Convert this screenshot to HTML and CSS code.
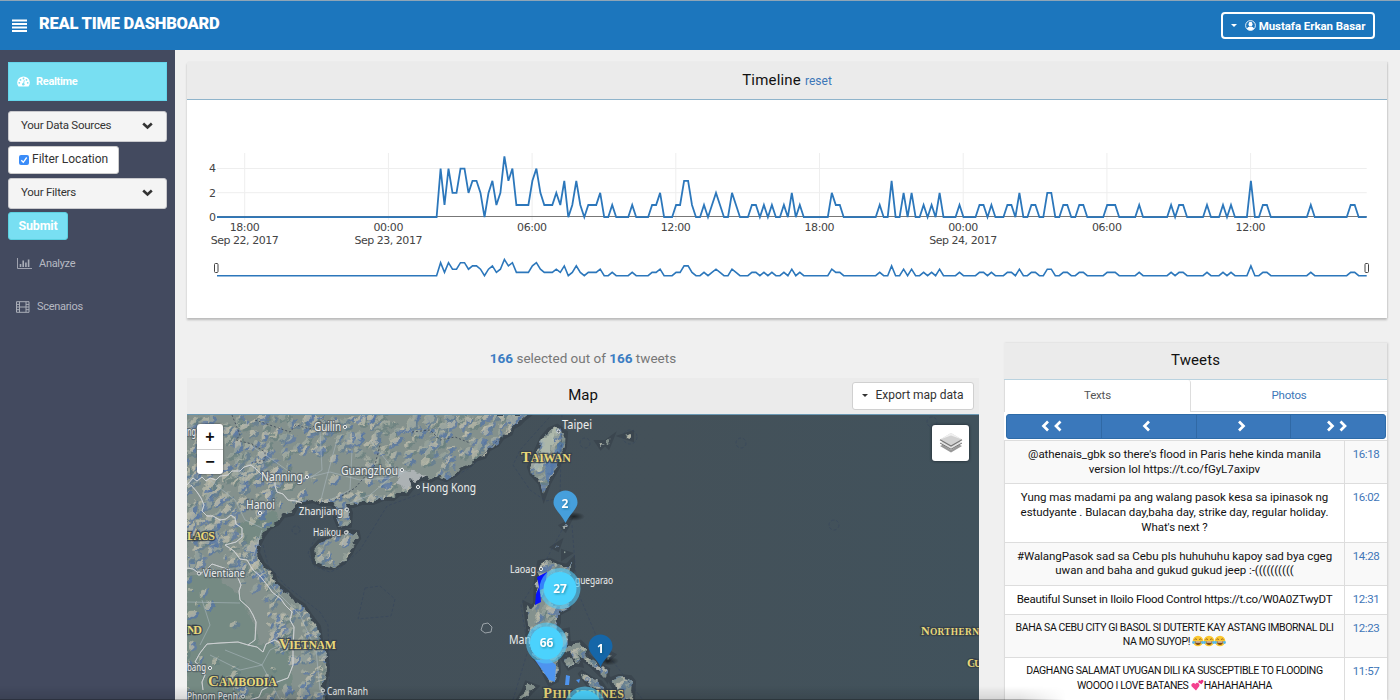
FILE: index.html
```html
<!DOCTYPE html>
<html lang="en">
<head>
<meta charset="utf-8">
<title>Real Time Dashboard</title>
<link rel="stylesheet" href="styles.css">
</head>
<body>
<header class="topbar">
  <svg class="burger" width="15" height="14" viewBox="0 0 15 14"><path d="M0 1.500h15M0 5h15M0 8.500h15M0 12h15" stroke="#fff" stroke-width="2"/></svg>
  <h1 class="brand">REAL TIME DASHBOARD</h1>
  <button class="user"><i class="caret"></i>
    <svg width="11" height="11" viewBox="0 0 11 11"><circle cx="5.500" cy="5.500" r="4.900" fill="none" stroke="#fff" stroke-width=".9"/><ellipse cx="5.500" cy="4.200" rx="2" ry="2.400" fill="#fff"/><path d="M1.800 8.700Q2.800 6.800 4.600 6.400L5.500 7L6.400 6.400Q8.200 6.800 9.200 8.700Q5.500 12 1.800 8.700Z" fill="#fff"/></svg>
    <span>Mustafa Erkan Basar</span></button>
</header>
<div class="shell">
  <nav class="sidebar">
    <a class="nav active"><svg width="13" height="11" viewBox="0 0 13 11"><path d="M1.500 10.600A6.300 6.300 0 1 1 11.500 10.600Z" fill="#fff"/><g fill="#78dff2"><circle cx="2.300" cy="6.800" r=".9"/><circle cx="3.500" cy="3.900" r=".9"/><circle cx="6.500" cy="2.500" r=".9"/><circle cx="9.500" cy="3.900" r=".9"/><circle cx="10.700" cy="6.800" r=".9"/><circle cx="6.300" cy="8.300" r="1.300"/></g><path d="M6.300 8.300L7.400 4.300" stroke="#78dff2" stroke-width=".9"/></svg><span>Realtime</span></a>
    <div class="select"><span>Your Data Sources</span><svg width="11" height="8" viewBox="0 0 11 8"><path d="M1.200 1.500L5.500 5.500L9.800 1.500" fill="none" stroke="#333" stroke-width="2.600"/></svg></div>
    <label class="check"><svg width="10" height="10" viewBox="0 0 10 10"><rect width="10" height="10" rx="2" fill="#3b8cf8"/><path d="M2.300 5.200L4.300 7.300L7.700 2.500" fill="none" stroke="#fff" stroke-width="1.300"/></svg><span>Filter Location</span></label>
    <div class="select"><span>Your Filters</span><svg width="11" height="8" viewBox="0 0 11 8"><path d="M1.200 1.500L5.500 5.500L9.800 1.500" fill="none" stroke="#333" stroke-width="2.600"/></svg></div>
    <button class="submit">Submit</button>
    <a class="nav plain"><svg width="15" height="11" viewBox="0 0 15 11"><path d="M.5 0V10.500H15" fill="none" stroke="#a9adb7" stroke-width=".9"/><path d="M3.500 9V6M6.200 9V2.500M8.900 9V4.500M11.600 9V1.500" stroke="#a9adb7" stroke-width="1.600"/></svg><span>Analyze</span></a>
    <a class="nav plain last"><svg width="14" height="12" viewBox="0 0 14 12"><path d="M.5.7H13V11.300H.5ZM3.500.7V11.300M10 .7V11.300M3.500 6H10M.5 3.400H3.500M.5 6H3.500M.5 8.700H3.500M10 3.400H13M10 6H13M10 8.700H13" fill="none" stroke="#a9adb7"/></svg><span>Scenarios</span></a>
  </nav>
  <main class="content">
    <section class="card timeline">
      <div class="card-head"><h2>Timeline</h2><a class="reset">reset</a></div>
      <svg class="chart" id="chart" viewBox="187 100 1200 217" width="1200" height="217"></svg>
    </section>
    <div class="columns">
      <div class="left">
        <p class="summary"><b>166</b> selected out of <b>166</b> tweets</p>
        <section class="mapcard">
          <div class="map-head"><h2>Map</h2><button class="export"><i class="caret dark"></i><span>Export map data</span></button></div>
          <div class="map">
<svg width="792" height="285" viewBox="187 415 792 285">
<defs>
<clipPath id="land"><path id="coast" d="M187 415H528L523 419L519 423L512 427L510 433L502 437L497 444L488 449L484 456L475 459L470 464L460 468L455 474L446 479L437 476L430 480L422 477L415 482L410 479L412 487L407 493L399 493L393 498L383 498L373 502L362 502L353 505L347 505L350 513L349 525L340 527L336 517L337 507L332 503L321 503L313 500L303 502L297 504L292 513L283 515L277 523L269 527L263 535L258 545L257 553L262 564L268 570L273 575L275 583L286 592L294 600L303 606L309 615L318 627L320 640L325 650L327 670L323 685L325 700H187Z
M313 550L320 542L333 537L347 532L357 533L358 538L354 544L350 553L343 562L332 567L323 566L315 562Z
M557 427L565 433L564 447L557 467L548 483L544 494L541 483L532 473L530 467L535 455L543 438L550 430Z
M540 563L550 561L558 565L567 567L572 562L572 570L568 580L573 590L568 608L558 613L558 622L555 630L558 633L567 631L568 645L580 643L587 650L585 655L595 662L600 667L607 677L602 675L590 663L577 655L567 651L557 657L558 672L556 680L550 683L540 663L533 655L528 640L529 627L526 605L532 608L536 604L537 580Z
M564 659L571 658L574 664L569 667ZM567 651L578 656L580 664L576 663L573 657ZM580 672L592 680L598 690L590 686ZM592 680L600 683L606 692L603 700L596 690ZM611 680L619 677L630 678L633 682L632 700H622L616 689ZM527 684L535 687L530 692L523 700H519L524 692ZM602 667L607 670L606 677L602 672Z
M599 443L604 443L601 446ZM606 443L610 440L608 445ZM625 436L631 434L631 438ZM555 547L558 545L557 548ZM564 553L567 554L564 556ZM563 526L567 524L565 528ZM604 651L612 655L608 659Z"/></clipPath>
<filter id="rough" filterUnits="userSpaceOnUse" x="180" y="408" width="480" height="300"><feTurbulence type="fractalNoise" baseFrequency=".16" numOctaves="2" seed="4"/><feDisplacementMap in="SourceGraphic" scale="7" xChannelSelector="R" yChannelSelector="G"/></filter>
<radialGradient id="shade"><stop offset="0" stop-color="#000" stop-opacity=".55"/><stop offset="1" stop-color="#000" stop-opacity="0"/></radialGradient>
<linearGradient id="sea" x1="0" x2="1"><stop offset="0" stop-color="#43505a"/><stop offset=".6" stop-color="#445159"/><stop offset="1" stop-color="#41525c"/></linearGradient>
</defs>
<rect x="187" y="415" width="792" height="285" fill="url(#sea)"/>
<use href="#coast" fill="none" stroke="#3b464f" stroke-width="6"/>
<rect x="187" y="415" width="300" height="14" fill="#84918d"/><rect x="187" y="415" width="14" height="285" fill="#7c8d88"/><rect x="187" y="690" width="134" height="10" fill="#7c8d88"/>
<g filter="url(#rough)"><g clip-path="url(#land)">
<use href="#coast" fill="#84918d"/>
<path d="M187 575L215 575L240 595L253 620L258 645L290 640L292 685L250 700H187ZM235 525L275 510L280 525L262 535L258 555L240 540Z" fill="#758a83"/>
<g id="relief"></g>
<path d="M557 427L553 445L540 472L534 470L543 440Z" fill="#bec8b7" opacity=".7"/><path d="M564 440L557 465L547 484L545 472L551 455Z" fill="#4a73ad" opacity=".7"/>
<path d="M393 470L397 466L401 470L412 471L425 476L420 483L411 484L407 491L402 485L396 483L399 477Z" fill="#b9bec2" opacity=".75"/>
</g></g>
<g fill="none" stroke="#aebcc2" stroke-width="1" opacity=".55"><path d="M250 445L270 458L298 478M320 430L322 470L310 478M337 440L326 480L321 500M352 450L350 490L330 500M298 480L330 472L360 480L390 478L410 470M390 478L370 495L350 503M370 440L390 465L402 475M210 480L235 500L245 520L262 528M202 600L210 625L200 645M187 602L240 603M262 530L252 560L275 590L300 615L316 650L320 690M225 650L262 665L270 650L290 640M210 655L240 670L262 665L280 700M345 535L342 545"/></g>
<g fill="none" stroke="#444d57" stroke-width="2.700" opacity=".65"><use href="#borders"/></g>
<path id="borders" d="M187 485L193 478L197 481L202 477L206 481L210 478L216 480L220 476L228 475L232 471L240 471L244 467L251 465L256 469L262 475L268 476L275 480L275 486L277 492L283 494L288 500L296 501L302 503M191 485L197 492L201 498L204 505L202 511L207 516L213 516L220 520L226 519L231 515L235 518L236 524L242 528L242 537L236 542L225 545L234 551L240 559L247 560L253 570L260 576L268 586L272 592L281 599L285 605L292 612L290 620L294 627L293 650L293 665L288 678L277 682L270 686L262 690L259 697L250 700M187 568L193 569L200 574L208 568L212 564L221 567L230 570L238 578L241 585L239 591L240 600L249 608L253 615L256 622L255 640L248 645L238 642L220 643L207 644L200 653L195 662L202 667L205 675L202 682L203 690M248 645L257 647L263 652L266 644L275 640L283 645L293 642" fill="none" stroke="#d0d3d5" stroke-width=".9"/>
<path d="M232 415L240 435L236 440L252 444L265 452L265 460L252 463M255 420L290 432L296 425L310 429L325 418M335 500L355 488L375 465L380 445M412 432L430 430L440 440L455 437L470 443" fill="none" stroke="#384455" stroke-dasharray="2 2" opacity=".8"/>
<path d="M537 577L547 572L545 588L540 590L541 602L535 605L536 594L539 587Z" fill="#0712ff"/><path d="M535 660L549 659L556 665L555 682L549 680ZM566 675L570 676L569 685H565ZM576 680L580 679L579 683Z" fill="#4e94ef"/>
<g fill="none" stroke="#34445c" stroke-dasharray="3 2" opacity=".55"><path d="M365 588L380 586L395 599L391 616L358 619ZM528 415L500 438L470 468L425 492L387 506L360 550L340 568L330 572L315 567L308 553L315 538L330 530M556 410L520 450L513 465L530 490L546 501L560 498L562 410M562 530L545 562L529 592L521 605L528 650L513 700M572 525L577 590L600 645L643 700M263 545L268 565L285 585L320 612L328 625L330 700"/><circle cx="296" cy="530" r="4"/><circle cx="585" cy="443" r="5"/><circle cx="630" cy="437" r="7"/><circle cx="741" cy="443" r="5"/><circle cx="834" cy="525" r="5"/><circle cx="932" cy="422" r="5"/></g>
<path d="M483 624L488 623L492 627L491 632L485 633L481 630Z" fill="none" stroke="#b1b8bc" stroke-width=".8"/>
<g class="city"><text x="187" y="436" textLength="9">ng</text><text x="314" y="431" textLength="27">Guilin</text><text x="261" y="481" textLength="42">Nanning</text><text x="341" y="475" textLength="57">Guangzhou</text><text x="422" y="492" textLength="54">Hong Kong</text><text x="246" y="509" textLength="29">Hanoi</text><text x="299" y="514.500" class="sm" textLength="44">Zhanjiang</text><text x="313" y="536" class="sm" textLength="28">Haikou</text><text x="203" y="577" class="sm" textLength="42">Vientiane</text><text x="187" y="671" class="sm" textLength="19">bang</text><text x="187" y="700" class="sm" textLength="51">Phnom Penh</text><text x="327" y="694.500" class="sm" textLength="41">Cam Ranh</text><text x="562" y="429" textLength="30">Taipei</text><text x="510" y="573" class="sm" textLength="26">Laoag</text><text x="575" y="584" class="sm" textLength="38">guegarao</text><text x="509" y="644" textLength="22">Man</text></g>
<g fill="#56626b" stroke="#eef0f0"><circle cx="345" cy="427" r="1.600"/><circle cx="307" cy="477" r="1.600"/><circle cx="402" cy="470" r="1.600"/><circle cx="418" cy="487" r="1.600"/><circle cx="260" cy="513" r="1.600"/><circle cx="347" cy="509.500" r="1.600"/><circle cx="346" cy="532.500" r="1.600"/><circle cx="199" cy="573.500" r="1.600"/><circle cx="210" cy="668" r="1.600"/><circle cx="243" cy="696.500" r="1.600"/><circle cx="323" cy="690.500" r="1.600"/><circle cx="558.500" cy="431.500" r="1.600"/><circle cx="541" cy="569" r="1.600"/></g>
<g class="country"><text x="521" y="462" textLength="50">T<tspan>AIWAN</tspan></text><text x="187" y="540" textLength="28"><tspan>LAOS</tspan></text><text x="187" y="634" textLength="15"><tspan>ND</tspan></text><text x="279" y="649" textLength="57">V<tspan>IETNAM</tspan></text><text x="208" y="685.500" textLength="69">C<tspan>AMBODIA</tspan></text><text x="543" y="698" textLength="81">P<tspan>HILIPPINES</tspan></text><text x="921" y="635" class="mini" textLength="58">N<tspan>ORTHERN</tspan></text><text x="967" y="666.500" class="mini" textLength="14">G<tspan>U</tspan></text></g>
<ellipse cx="574" cy="516.500" rx="11" ry="4.500" fill="url(#shade)"/><ellipse cx="608" cy="661" rx="11" ry="4.500" fill="url(#shade)"/>
<path d="M565.500 523C562 515 553.500 509 553.500 502.500A12 12 0 0 1 577.500 502.500C577.500 509 569 515 565.500 523Z" fill="#469fdc"/>
<path d="M600.500 667C597 659 588.500 653 588.500 646.500A12 12 0 0 1 612.500 646.500C612.500 653 604 659 600.500 667Z" fill="#1566a8"/>
<g fill="#52c8f5" fill-opacity=".62"><circle cx="560" cy="588.500" r="20.500"/><circle cx="546.500" cy="643" r="20.500"/><circle cx="585" cy="707" r="20.500"/></g>
<g fill="#4bd2fd"><circle cx="560" cy="588.500" r="16.500"/><circle cx="546.500" cy="643" r="16.500"/><circle cx="585" cy="707" r="16.500"/></g>
<g class="num"><text x="565" y="508">2</text><text x="600.500" y="652.500">1</text><text x="560" y="592.500">27</text><text x="546.500" y="647">66</text></g>
</svg>
            <div class="zoom"><span>+</span><span>−</span></div>
            <div class="layers"><svg width="24" height="22" viewBox="0 0 24 22"><path d="M1 14L12 20.500L23 14L12 9Z" fill="#989898"/><path d="M1 11L12 18L23 11L12 6Z" fill="#e2e2e2"/><path d="M1 11L12 17.200L23 11" fill="none" stroke="#777"/><path d="M1 7.500L12 14.500L23 7.500L12 1Z" fill="#d2d2d2"/><path d="M1 7.500L12 1L23 7.500L12 3.500Z" fill="#f0f0f0"/><path d="M1 7.800L12 14L23 7.800" fill="none" stroke="#777" stroke-width="1.200"/></svg></div>
          </div>
        </section>
      </div>
      <section class="tweets">
        <div class="card-head"><h2>Tweets</h2></div>
        <div class="tabs"><a class="tab on">Texts</a><a class="tab">Photos</a></div>
        <div class="pager">
          <span><svg width="21" height="12" viewBox="0 0 21 12"><path d="M7 1.500L2.500 6L7 10.500M19.500 1.500L15 6L19.500 10.500"/></svg></span>
          <span><svg width="9" height="12" viewBox="0 0 9 12"><path d="M7 1.500L2.500 6L7 10.500"/></svg></span>
          <span><svg width="9" height="12" viewBox="0 0 9 12"><path d="M2 1.500L6.500 6L2 10.500"/></svg></span>
          <span><svg width="21" height="12" viewBox="0 0 21 12"><path d="M2 1.500L6.500 6L2 10.500M14.500 1.500L19 6L14.500 10.500"/></svg></span>
        </div>
        <div class="rows">
          <div class="row"><p>@athenais_gbk so there's flood in Paris hehe kinda manila<br>version lol https://t.co/fGyL7axipv</p><time>16:18</time></div>
          <div class="row"><p>Yung mas madami pa ang walang pasok kesa sa ipinasok ng<br>estudyante . Bulacan day,baha day, strike day, regular holiday.<br>What's next ?</p><time>16:02</time></div>
          <div class="row"><p>#WalangPasok sad sa Cebu pls huhuhuhu kapoy sad bya cgeg<br>uwan and baha and gukud gukud jeep :-((((((((((</p><time>14:28</time></div>
          <div class="row tight"><p>Beautiful Sunset in Iloilo Flood Control https://t.co/W0A0ZTwyDT</p><time>12:31</time></div>
          <div class="row caps"><p>BAHA SA CEBU CITY GI BASOL SI DUTERTE KAY ASTANG IMBORNAL DLI<br>NA MO SUYOP! <svg class="emoji" width="34" height="12" viewBox="0 0 34 12"><defs><g id="joy"><circle cx="6" cy="6" r="5.300" fill="#fbc72f"/><path d="M2.700 6.200H9.300Q8.800 10 6 10T2.700 6.200Z" fill="#7c4a1c"/><path d="M3.400 6.500H8.600V7.500H3.400Z" fill="#fff"/><path d="M2.500 4.600Q3.700 3.200 4.900 4.600M7.100 4.600Q8.300 3.200 9.500 4.600" fill="none" stroke="#7c4a1c" stroke-width=".8"/><circle cx="1.500" cy="7.500" r="1.400" fill="#56b9ec"/><circle cx="10.500" cy="7.500" r="1.400" fill="#56b9ec"/></g></defs><use href="#joy"/><use href="#joy" x="11"/><use href="#joy" x="22"/></svg></p><time>12:23</time></div>
          <div class="row caps"><p>DAGHANG SALAMAT UYUGAN DILI KA SUSCEPTIBLE TO FLOODING<br>WOOOO I LOVE BATANES <svg class="emoji" width="13" height="12" viewBox="0 0 13 12"><path d="M5 11.500L.8 7.500C-.8 5 2.500 2.500 4.300 5C6 2.300 9.400 4.500 8.200 7.200Z" fill="#f4418f"/><path d="M10.500 5.300L7.500 3.500C6.600 1.800 8.500.3 9.700 1.800C10.500 0 13 .9 12.300 2.800Z" fill="#e63384"/></svg>HAHAHAHAHA</p><time>11:57</time></div>
        </div>
      </section>
    </div>
  </main>
</div>
<div class="status-shadow"></div>
<script src="app.js"></script>
</body>
</html>
```
FILE: styles.css
```css
* { box-sizing: border-box; }
body { margin: 0; width: 1400px; height: 700px; overflow: hidden; background: #f0f0f0; font-family: Roboto, "Liberation Sans", sans-serif; color: #222; }
button { font: inherit; }
h1, h2, p { margin: 0; font-weight: 400; }
.topbar { height: 50px; background: #1c76bd; border-top: 1px solid #8fa5b6; display: flex; align-items: center; padding: 0 25px 0 12px; }
.burger { margin-right: 12px; }
.brand { color: #fff; font-size: 16.500px; font-weight: 900; letter-spacing: -.25px; flex: 1; line-height: 20px; padding-bottom: 3px; }
.user { height: 27px; width: 154px; border: 2px solid #fff; border-radius: 4px; background: none; color: #fff; font-size: 11.500px; font-weight: 700; letter-spacing: -.05px; display: flex; align-items: center; justify-content: center; gap: 3px; padding: 0; white-space: nowrap; }
.caret { border: 3px solid transparent; border-top-color: #fff; border-bottom: 0; margin-right: 5px; }
.caret.dark { border-top-color: #333; margin-right: 7px; }
.shell { display: flex; height: 650px; }
.sidebar { width: 175px; background: #434a5f; padding: 12px 8px; display: flex; flex-direction: column; align-items: flex-start; }
.nav { display: flex; align-items: center; gap: 7px; padding-left: 9px; font-size: 11px; width: 159px; }
.active { height: 39px; background: #78dff2; border: 1px solid #65d5eb; color: #fff; font-weight: 700; letter-spacing: -.3px; gap: 6px; margin-bottom: 10px; padding-left: 8px; }
.select { width: 159px; height: 31px; background: #f4f4f4; border: 1px solid #c9c9cd; border-radius: 3px; display: flex; justify-content: space-between; align-items: center; padding: 0 13px 2px 12px; font-size: 11.500px; letter-spacing: -.25px; color: #333; }
.select span { padding-bottom: 1px; }
.select svg { margin-top: 1px; }
.check { height: 28px; width: 111px; margin: 4px 0; background: #fff; border: 1px solid #ccc; border-radius: 3px; display: flex; align-items: center; gap: 3px; padding-left: 10px; font-size: 12px; color: #333; white-space: nowrap; }
.check span { padding-bottom: 2px; }
.submit { height: 28px; width: 60px; margin: 3px 0 16px; border: 1px solid #5bd0df; border-radius: 3px; background: #78dff2; color: #fff; font-size: 12.500px; font-weight: 700; letter-spacing: -.2px; padding: 0 0 2px; }
.plain { height: 15px; color: #b6b9c2; font-size: 11px; letter-spacing: -.3px; }
.last { margin-top: 28px; padding-left: 8px; }
.content { flex: 1; padding: 12px 13px 0 12px; }
.card-head { height: 38px; background: #ebebeb; border-bottom: 1px solid #8fb4cb; display: flex; align-items: center; justify-content: center; gap: 4px; }
.card-head h2, .map-head h2 { font-size: 15px; color: #111; letter-spacing: .2px; line-height: 20px; padding-bottom: 2px; }
.reset { color: #3d77b8; font-size: 12px; }
.timeline { height: 256px; background: #fff; box-shadow: 0 2px 2px #bbb, 1px 0 1px #ddd; }
.chart { display: block; }
.chart text { font: 11px "DejaVu Sans", sans-serif; fill: #444; }
.columns { display: flex; gap: 25px; align-items: flex-start; }
.left { width: 792px; }
.summary { height: 60px; padding-top: 31px; text-align: center; font-size: 13.500px; line-height: 18px; color: #777; }
.summary b { color: #3c7dc3; }
.map-head { height: 37px; background: #ebebeb; border-bottom: 1px solid #6a98b3; display: grid; grid-template-columns: 1fr auto 1fr; align-items: center; padding-right: 5px; padding-left: 5px; }
.map-head h2 { grid-column: 2; letter-spacing: 0; }
.export { justify-self: end; width: 122px; height: 28px; background: #fff; border: 1px solid #d0d0d0; border-radius: 3px; font-size: 12px; color: #333; display: flex; align-items: center; justify-content: center; padding: 0 0 2px; white-space: nowrap; }
.map { position: relative; height: 285px; }
.map > svg { display: block; }
.city text { font: 12.500px "Noto Sans", sans-serif; fill: #eceeee; stroke: #4a555c; stroke-width: 2.500px; stroke-opacity: .65; paint-order: stroke; }
.city text.sm { font-size: 11px; }
.country text { font: bold 15px "Liberation Serif", serif; fill: #ead878; stroke: #333e49; stroke-width: 2.500px; stroke-opacity: .8; paint-order: stroke; }
.country tspan { font-size: 12px; }
.country text.mini { font-size: 12px; }
.country .mini tspan { font-size: 9.500px; }
.num text { font: bold 12px "Open Sans", sans-serif; fill: #fff; text-anchor: middle; filter: drop-shadow(1px 1px 1px #0568); }
.zoom { position: absolute; left: 10px; top: 9px; width: 26px; height: 50px; background: #fff; border-radius: 3px; box-shadow: 0 0 2px #333; display: flex; flex-direction: column; }
.zoom span { height: 25px; text-align: center; font: bold 16px/25px "Liberation Sans", sans-serif; color: #111; }
.zoom span + span { border-top: 1px solid #ccc; line-height: 23px; }
.layers { position: absolute; right: 10px; top: 10px; width: 37px; height: 36px; background: #fff; border-radius: 3px; box-shadow: 0 0 3px #18222a; display: flex; align-items: center; justify-content: center; }
.tweets { width: 383px; margin-top: 25px; height: 357px; background: #fff; box-shadow: 1px 0 2px #ccc; }
.tweets .card-head { height: 36px; border-bottom: 0; }
.tweets .card-head h2 { padding-bottom: 3px; letter-spacing: .1px; }
.tabs { display: flex; height: 33px; border-top: 1.500px solid #b9d2df; font-size: 11.500px; letter-spacing: -.2px; }
.tab { flex: 1; text-align: center; line-height: 31px; color: #3d77b8; border-bottom: 1px solid #ddd; }
.tab.on { flex: 0 0 187px; color: #555; border: 1px solid #ddd; border-top: 0; border-bottom: 0; border-radius: 0 3px 0 0; }
.pager { margin: 2px 1px 1px 2px; height: 25px; background: #3a78bb; border: 1px solid #2d6ba8; border-radius: 3px; display: flex; }
.pager span { flex: 1; display: flex; align-items: center; justify-content: center; border-left: 1px solid #3069a5; padding: 0 4px 1px 0; }
.pager span:first-child { border: 0; }
.pager path { fill: none; stroke: #fff; stroke-width: 2.700; }
.rows { font-size: 11.500px; line-height: 14.700px; letter-spacing: -.05px; border-left: 1px solid #ddd; }
.row { display: flex; border-top: 1px solid #ddd; background: #fff; }
.row:nth-child(odd) { background: #f9f9f9; }
.row p { width: 339px; padding: 6px 0 7px; text-align: center; color: #111; white-space: nowrap; }
.row time { flex: 1; padding: 6px 0 7px; text-align: center; border-left: 1px solid #ddd; color: #3f76b8; font-size: 11.500px; letter-spacing: -.4px; }
.tight p { letter-spacing: -.25px; }
.caps p { font-size: 10.500px; letter-spacing: -.38px; }
.emoji { vertical-align: -2px; }
.status-shadow { position: absolute; left: 0; bottom: 0; width: 1066px; height: 14px; background: linear-gradient(#0000, #0000001c); -webkit-mask: linear-gradient(90deg, #000 1020px, #0000); border-bottom: 1px solid #0005; }
```
FILE: app.js
```js
const NS = 'http://www.w3.org/2000/svg';
function add(parent, tag, attrs, text) {
  const el = document.createElementNS(NS, tag);
  for (const k in attrs) el.setAttribute(k, attrs[k]);
  if (text) el.textContent = text;
  parent.appendChild(el);
}

// Map labels use a condensed face
document.querySelectorAll('.city text').forEach(t => t.setAttribute('lengthAdjust', 'spacingAndGlyphs'));

// Tweets per ten minutes
const counts = new Array(289).fill(0);
'41422442332023125341111342111213013101112'.split('').forEach((v, i) => counts[56 + i] = +v);
[[99,1],[104,1],[109,1],[110,1],[111,2],[115,1],[116,1],[117,3],[118,3],[119,1],[122,1],[124,1],[125,2],[126,1],[129,2],[130,1],[134,1],[135,1],[137,1],[139,1],[142,1],[144,2],[146,1],[154,2],[155,1],[156,1],[166,1],[169,3],[172,2],[174,2],[177,1],[179,1],[181,2],[186,1],[191,1],[192,1],[194,1],[198,1],[199,1],[201,2],[204,1],[205,1],[208,2],[209,2],[212,1],[213,1],[216,1],[217,1],[223,1],[224,1],[225,1],[231,1],[239,1],[241,1],[242,1],[248,1],[252,1],[254,1],[259,3],[262,1],[263,1],[274,1],[284,1],[285,1]].forEach(([i, v]) => counts[i] = v);

const chart = document.getElementById('chart');
const ticks = ['18:00', '00:00', '06:00', '12:00', '18:00', '00:00', '06:00', '12:00'];
const days = { 0: 'Sep 22, 2017', 1: 'Sep 23, 2017', 5: 'Sep 24, 2017' };
ticks.forEach((t, i) => {
  const x = 244.7 + i * 143.7;
  add(chart, 'path', { d: `M${x} 153V220`, stroke: '#eee' });
  add(chart, 'text', { x: x - 15, y: 231, textLength: 30 }, t);
  if (days[i]) add(chart, 'text', { x: x - 34, y: 244, textLength: 68 }, days[i]);
});
add(chart, 'path', { d: 'M217 168.500H1366.700M217 192.700H1366.700', stroke: '#eee' });
add(chart, 'path', { d: 'M217 216.500H1366.700', stroke: '#777' });
[172, 197, 221].forEach((y, i) => add(chart, 'text', { x: 209, y }, String(4 - 2 * i)));
function line(base, unit, width) {
  const pts = counts.map((v, i) => `${(217 + i * 3.992).toFixed(1)},${(base - v * unit).toFixed(1)}`).join(' ');
  add(chart, 'polyline', { points: pts, fill: 'none', stroke: '#2c77bb', 'stroke-width': width });
}
line(217.2, 12.15, 1.8);
line(275.700, 3.25, 1.6);
[214.500, 1365].forEach(x => add(chart, 'rect', { x, y: 263.500, width: 3.500, height: 9, rx: 1, fill: '#fff', stroke: '#444' }));

// Shaded relief: each ridge is a sunlit face with a blue shadow on its south-east side
let seed = 7;
const rnd = () => (seed = (seed * 16807) % 2147483647) / 2147483647;
const flats = [[215, 640, 52, 62], [262, 522, 24, 20], [325, 475, 38, 24], [255, 675, 38, 25], [408, 478, 20, 12]];
const relief = document.getElementById('relief');
const lit = ['#b5b6a8', '#bdbcab', '#a5aca2', '#99a49c'];
const dark = ['#5474a6', '#5d7ba6', '#627c92', '#68807f'];
function lens(x, y, dx, dy, w, fill, opacity) {
  const nx = dy * w, ny = dx * w, f = n => n.toFixed(1);
  add(relief, 'path', { d: `M${f(x)} ${f(y)}q${f(dx / 2 - nx)} ${f(-dy / 2 - ny)} ${f(dx)} ${f(-dy)}q${f(-dx / 2 + nx)} ${f(dy / 2 + ny)} ${f(-dx)} ${f(dy)}`, fill, opacity });
}
for (let i = 0; i < 2600; i++) {
  const x = 180 + rnd() * 460, y = 418 + rnd() * 290, k = Math.floor(rnd() * 4);
  const len = 5 + rnd() * 9, tilt = .35 + rnd() * .8, w = .3 + rnd() * .35, keep = rnd();
  if (keep > .13 && flats.some(([a, b, p, q]) => ((x - a) / p) ** 2 + ((y - b) / q) ** 2 < 1)) continue;
  const dx = Math.cos(tilt) * len, dy = Math.sin(tilt) * len;
  lens(x + 2, y + 1.8, dx, dy, w, dark[k], .75);
  lens(x, y, dx * .9, dy * .9, w, lit[Math.floor(keep * 4)], .8);
}
```
